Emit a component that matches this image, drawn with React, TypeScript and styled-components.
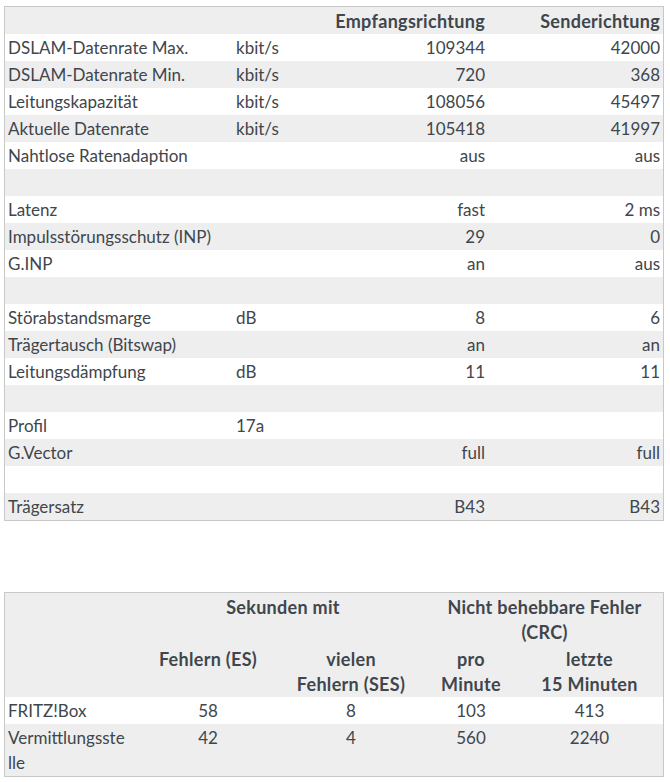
import styled, { createGlobalStyle } from 'styled-components';

const GlobalStyle = createGlobalStyle`
  html, body {
    margin: 0;
    padding: 0;
    background: #fff;
  }

  body {
    font-family: Lato, 'Open Sans', sans-serif;
    font-size: 17px;
    color: #3f464c;
  }
`;

const Page = styled.div`
  display: flex;
  flex-direction: column;
  gap: 71px;
  padding: 6px 6px 0 4px;
`;

const Table = styled.table`
  width: 660px;
  table-layout: fixed;
  border-collapse: separate;
  border-spacing: 0;
  border: 1px solid #c8c8c8;
`;

const HeadRow = styled.tr`
  background: #eeeeee;
`;

const Body = styled.tbody`
  tr:nth-child(odd) {
    background: #ffffff;
  }

  tr:nth-child(even) {
    background: #eeeeee;
  }
`;

type Align = 'left' | 'right' | 'center';

const Th = styled.th<{ $align?: Align }>`
  padding: 2px 3px 0;
  height: 25px;
  line-height: 25px;
  font-size: 18px;
  font-weight: 700;
  letter-spacing: 0.3px;
  text-align: ${({ $align }) => $align ?? 'left'};
  vertical-align: top;
`;

const Td = styled.td<{ $align?: Align }>`
  padding: 1px 3px;
  height: 25px;
  line-height: 25px;
  font-weight: 400;
  text-align: ${({ $align }) => $align ?? 'left'};
  vertical-align: top;
  white-space: nowrap;
`;

type LineRow = [string, string, string, string] | null;

const lineRows: LineRow[] = [
  ['DSLAM-Datenrate Max.', 'kbit/s', '109344', '42000'],
  ['DSLAM-Datenrate Min.', 'kbit/s', '720', '368'],
  ['Leitungskapazität', 'kbit/s', '108056', '45497'],
  ['Aktuelle Datenrate', 'kbit/s', '105418', '41997'],
  ['Nahtlose Ratenadaption', '', 'aus', 'aus'],
  null,
  ['Latenz', '', 'fast', '2 ms'],
  ['Impulsstörungsschutz (INP)', '', '29', '0'],
  ['G.INP', '', 'an', 'aus'],
  null,
  ['Störabstandsmarge', 'dB', '8', '6'],
  ['Trägertausch (Bitswap)', '', 'an', 'an'],
  ['Leitungsdämpfung', 'dB', '11', '11'],
  null,
  ['Profil', '17a', '', ''],
  ['G.Vector', '', 'full', 'full'],
  null,
  ['Trägersatz', '', 'B43', 'B43'],
];

const errorRows = [
  { name: ['FRITZ!Box'], es: '58', ses: '8', perMin: '103', last15: '413' },
  {
    name: ['Vermittlungsste', 'lle'],
    es: '42',
    ses: '4',
    perMin: '560',
    last15: '2240',
  },
];

const LineTable = () => (
  <Table>
    <colgroup>
      <col style={{ width: 228 }} />
      <col style={{ width: 95 }} />
      <col style={{ width: 160 }} />
      <col style={{ width: 175 }} />
    </colgroup>
    <thead>
      <HeadRow>
        <Th />
        <Th />
        <Th $align="right">Empfangsrichtung</Th>
        <Th $align="right">Senderichtung</Th>
      </HeadRow>
    </thead>
    <Body>
      {lineRows.map((row, i) =>
        row ? (
          <tr key={i}>
            <Td>{row[0]}</Td>
            <Td>{row[1]}</Td>
            <Td $align="right">{row[2]}</Td>
            <Td $align="right">{row[3]}</Td>
          </tr>
        ) : (
          <tr key={i}>
            <Td colSpan={4} />
          </tr>
        )
      )}
    </Body>
  </Table>
);

const ErrorTable = () => (
  <Table>
    <colgroup>
      <col style={{ width: 135 }} />
      <col style={{ width: 136 }} />
      <col style={{ width: 150 }} />
      <col style={{ width: 90 }} />
      <col style={{ width: 147 }} />
    </colgroup>
    <thead>
      <HeadRow>
        <Th />
        <Th colSpan={2} $align="center">
          Sekunden mit
        </Th>
        <Th colSpan={2} $align="center">
          Nicht behebbare Fehler
          <br />
          (CRC)
        </Th>
      </HeadRow>
      <HeadRow>
        <Th />
        <Th $align="center">Fehlern (ES)</Th>
        <Th $align="center">
          vielen
          <br />
          Fehlern (SES)
        </Th>
        <Th $align="center">
          pro
          <br />
          Minute
        </Th>
        <Th $align="center">
          letzte
          <br />
          15 Minuten
        </Th>
      </HeadRow>
    </thead>
    <Body>
      {errorRows.map((row) => (
        <tr key={row.name.join('')}>
          <Td>
            {row.name.map((part, i) => (
              <span key={part}>
                {i > 0 && <br />}
                {part}
              </span>
            ))}
          </Td>
          <Td $align="center">{row.es}</Td>
          <Td $align="center">{row.ses}</Td>
          <Td $align="center">{row.perMin}</Td>
          <Td $align="center">{row.last15}</Td>
        </tr>
      ))}
    </Body>
  </Table>
);

const App = () => (
  <>
    <GlobalStyle />
    <Page>
      <LineTable />
      <ErrorTable />
    </Page>
  </>
);

export default App;
